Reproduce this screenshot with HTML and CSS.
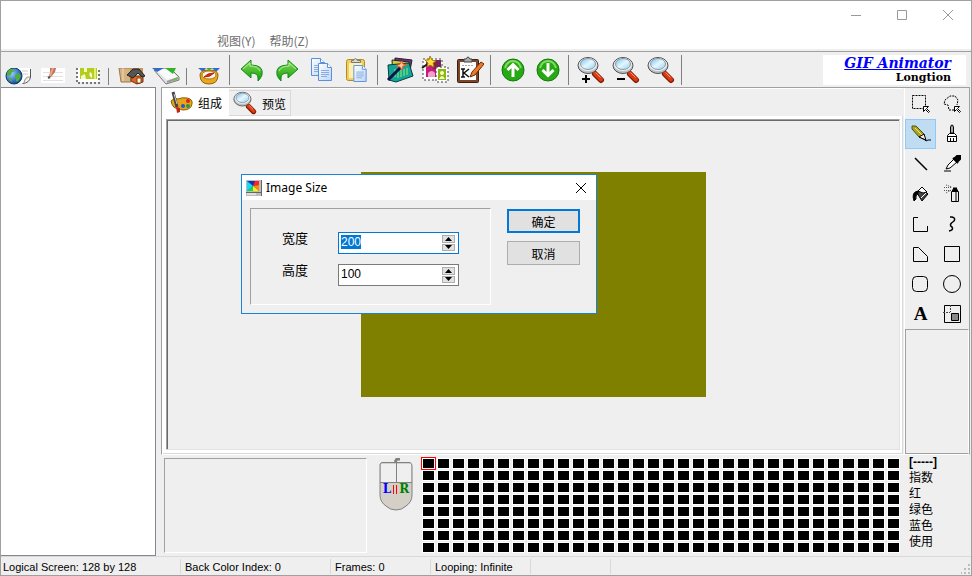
FILE: index.html
```html
<!DOCTYPE html>
<html lang="zh-CN">
<head>
    <meta charset="UTF-8">
    <meta name="viewport" content="width=device-width, initial-scale=1.0">
    <title>GIF Animator</title>
    <link rel="stylesheet" href="styles.css">
</head>
<body>
    <svg class="defs" width="0" height="0" aria-hidden="true">
        <defs>
            <linearGradient id="green" x1="0" y1="0" x2="0" y2="1">
                <stop offset="0" stop-color="#8fe05a"/>
                <stop offset="1" stop-color="#0c9a08"/>
            </linearGradient>
            <linearGradient id="paper" x1="0" y1="0" x2="1" y2="1">
                <stop offset="0" stop-color="#ffffff"/>
                <stop offset="1" stop-color="#b9d5fb"/>
            </linearGradient>
            <radialGradient id="ball" cx="0.35" cy="0.35" r="0.7">
                <stop offset="0" stop-color="#9fd0ff"/>
                <stop offset="1" stop-color="#06409c"/>
            </radialGradient>
            <linearGradient id="glass" x1="0" y1="0" x2="1" y2="1">
                <stop offset="0" stop-color="#6cc0f4"/>
                <stop offset="0.5" stop-color="#e6f7ff"/>
                <stop offset="1" stop-color="#8fd0f6"/>
            </linearGradient>
            <symbol id="magnifier" viewBox="0 0 28 28">
                <path d="M18 18l6 6" stroke="#7a1a05" stroke-width="6" stroke-linecap="round"/>
                <path d="M18 17.500l6 6" stroke="#dd3a12" stroke-width="4" stroke-linecap="round"/>
                <path d="M18.500 16.500l5 5" stroke="#ff9a70" stroke-width="1"/>
                <ellipse cx="11" cy="9.500" rx="10" ry="8" fill="#b9c0c3" stroke="#555" stroke-width="1"/>
                <ellipse cx="11" cy="8.500" rx="9" ry="6.500" fill="#f4f4f4"/>
                <ellipse cx="11" cy="8" rx="7.500" ry="5.500" fill="url(#glass)" stroke="#8b979c" stroke-width="1"/>
            </symbol>
            <symbol id="sheet" viewBox="0 0 14 18">
                <path d="M.5.5h9l4 4v13H.5z" fill="url(#paper)" stroke="#5b8fd6"/>
                <path d="M9.500.5v4h4" fill="#fff" stroke="#5b8fd6"/>
                <path d="M3 7.500h8M3 9.500h8M3 11.500h8M3 13.500h6" stroke="#8badde"/>
            </symbol>
        </defs>
    </svg>

    <div class="window">
        <header class="titlebar">
            <div class="window-buttons">
                <button type="button" aria-label="Minimize"><svg width="12" height="12"><path d="M1 6.500h10" stroke="#999"/></svg></button>
                <button type="button" aria-label="Maximize"><svg width="12" height="12"><path d="M1.500 1.500h9v9h-9z" fill="none" stroke="#999"/></svg></button>
                <button type="button" aria-label="Close"><svg width="12" height="12"><path d="M1 1l10 10M11 1L1 11" stroke="#999"/></svg></button>
            </div>
            <nav class="menu">
                <a href="#">视图(Y)</a>
                <a href="#">帮助(Z)</a>
            </nav>
        </header>

        <div class="toolbar">
            <button class="tool cut" type="button" aria-label="Web page">
                <svg width="26" height="17">
                    <path d="M12 0h13v9q-1 6-7 6h-6z" fill="#fff"/>
                    <path d="M25.500 1v8q-1 6-8 6.500" fill="none" stroke="#555"/>
                    <path d="M25 9q-5-1-6 6" fill="#e4e4e4" stroke="#999"/>
                    <path d="M17 3h6M17 6h6" stroke="#ccc"/>
                    <circle cx="9" cy="8" r="8" fill="url(#ball)" stroke="#123a70"/>
                    <path d="M2 5q2-5 6-4l2 2-3 1-1 3-4 1zM10 7l4-2 2 3q-1 4-4 6-2-1-1-3-2-2-1-4zM4 10l3 1v3l-3-2z" fill="#4fae3d"/>
                </svg>
            </button>
            <button class="tool cut" type="button" aria-label="Script">
                <svg width="26" height="17">
                    <path d="M1 0h24v15H1z" fill="#fff"/>
                    <path d="M3 4.500h20M3 8.500h20M3 12.500h20" stroke="#e0e0e0"/>
                    <path d="M10 0h6l-1 4-4 5-3 1 2-5z" fill="#c0705a"/>
                    <path d="M13 0l-3 8" stroke="#e8a58a" stroke-width="2"/>
                    <path d="M8 10l2-1" stroke="#555" stroke-width="2"/>
                </svg>
            </button>
            <button class="tool cut" type="button" aria-label="Stamp">
                <svg width="26" height="17">
                    <path d="M2 0h22v14H2z" fill="#fff"/>
                    <path d="M2 0v15h22V0" fill="none" stroke="#777" stroke-width="2" stroke-dasharray="2 2"/>
                    <path d="M5 0h17v11H5z" fill="#b4cb20"/>
                    <path d="M9 0v4h3V0zM15 4q3 1 2 6q-4-2-2-6zM6 8l4-2 1 5H6z" fill="#f4fac4"/>
                    <path d="M20 0v11" stroke="#e6f070" stroke-width="2"/>
                </svg>
            </button>
            <span class="sep low"></span>
            <button class="tool cut" type="button" aria-label="Home">
                <svg width="28" height="17">
                    <path d="M2 0h12v14H4z" fill="#d6b283" stroke="#9b784b"/>
                    <path d="M6 0v13" stroke="#f0dab4"/>
                    <path d="M13 0h13v6H13z" fill="#c39660"/>
                    <path d="M14 8h12v6l-6 2-6-3z" fill="#d86820" stroke="#713009"/>
                    <path d="M10 7l6-6h6l6 7-3 1-4-4-5 5z" fill="#555" stroke="#222"/>
                    <path d="M20 10h4v5h-4z" fill="#fff" stroke="#893a0c"/>
                </svg>
            </button>
            <button class="tool cut" type="button" aria-label="Save">
                <svg width="28" height="17">
                    <path d="M2 2l16-2 9 9v3l-13 4z" fill="#e4e4e4" stroke="#777"/>
                    <path d="M4 2l13-2 8 9-10 3z" fill="#fafafa"/>
                    <path d="M15 14l11-4" stroke="#999" stroke-width="2"/>
                    <path d="M0 0h12L5 4z" fill="#2c6dcc"/>
                    <path d="M13 0h11l-3 6z" fill="#2fb42a"/>
                    <path d="M22 12l3-1" stroke="#5acb38" stroke-width="2"/>
                </svg>
            </button>
            <span class="sep low"></span>
            <button class="tool cut" type="button" aria-label="Preview in browser">
                <svg width="26" height="17">
                    <path d="M2 0h8l-3 4zM16 0h8l-4 4z" fill="#286fd0"/>
                    <path d="M10 0h7l-4 2z" fill="#36a936"/>
                    <path d="M4 7q0-5 9-5t9 5q0 9-9 9T4 7z" fill="#e9a81c" stroke="#94620b"/>
                    <ellipse cx="13" cy="7" rx="7" ry="4" fill="#fff8e5" stroke="#a87922"/>
                    <path d="M8 9l4-3 6-1-4 3z" fill="#e02a18" stroke="#b41f10"/>
                </svg>
            </button>
            <span class="sep"></span>
            <button class="tool" type="button" aria-label="Undo">
                <svg width="24" height="24"><path d="M1 11L11 2v5q13 0 11 10-1 3-4 6v-3q0-5-7-5v5z" fill="url(#green)" stroke="#148a17"/><path d="M3 11l7-6v3q8 0 10 5" fill="none" stroke="#b2efa0"/></svg>
            </button>
            <button class="tool" type="button" aria-label="Redo">
                <svg width="24" height="24"><path d="M23 11L13 2v5Q0 7 2 17q1 3 4 6v-3q0-5 7-5v5z" fill="url(#green)" stroke="#148a17"/><path d="M21 11l-7-6v3q-8 0-10 5" fill="none" stroke="#b2efa0"/></svg>
            </button>
            <button class="tool" type="button" aria-label="Copy">
                <svg width="24" height="26"><use href="#sheet" x="1" y="1" width="14" height="18"/><use href="#sheet" x="8" y="6" width="14" height="18"/></svg>
            </button>
            <button class="tool" type="button" aria-label="Paste">
                <svg width="24" height="26">
                    <rect x="1.500" y="2.500" width="18" height="21" rx="2" fill="#f2cf5b" stroke="#b48b21"/>
                    <path d="M4 6h13v15H4z" fill="#fdf0b5"/>
                    <path d="M6.500 5.500v-2h2q2-4 4 0h3v2z" fill="#d8d8d8" stroke="#777"/>
                    <use href="#sheet" x="8" y="8" width="14" height="17"/>
                </svg>
            </button>
            <span class="sep"></span>
            <button class="tool" type="button" aria-label="Effects">
                <svg width="28" height="28">
                    <path d="M9 2l17 2-3 16L8 16z" fill="#7a2b88" stroke="#222"/>
                    <path d="M6 4l17 2 1 14L7 22z" fill="#d8c63c" stroke="#222"/>
                    <path d="M2 9l21-2 4 13-17 6-7-2z" fill="#12a69a" stroke="#093d3c"/>
                    <path d="M9 13v8M12 14v8M15 13v8M18 13v7M21 12v7" stroke="#9dea62"/>
                    <path d="M2 24L15 11" stroke="#0a1446" stroke-width="3"/>
                    <path d="M16 5l1 3 4 1-4 1-1 4-2-3-4-1 4-2z" fill="#ffc09a" stroke="#e75a28"/>
                </svg>
            </button>
            <button class="tool" type="button" aria-label="Stamp wizard">
                <svg width="28" height="28">
                    <path d="M2 3h19v21H2z" fill="#fff" stroke="#444" stroke-dasharray="2 2"/>
                    <path d="M5 6h14v15H5z" fill="#c81a7c"/>
                    <path d="M12 4h8v9h-8z" fill="#7a2454"/>
                    <path d="M7 21v-4q4-4 7 0v4z" fill="#f0a0ca"/>
                    <path d="M15 11h12v15H15z" fill="#fff" stroke="#444" stroke-dasharray="2 2"/>
                    <path d="M17 13h8v11h-8z" fill="#8eb514"/>
                    <circle cx="21" cy="17" r="2" fill="#f4ffc2"/>
                    <path d="M18 23q3-6 6 0z" fill="#f4ffc2"/>
                    <path d="M1 12l7-5" stroke="#1a1a1a" stroke-width="2"/>
                    <path d="M9 0l2 4 4 1-3 2 1 4-4-2-3 2 1-4-3-3h4z" fill="#ffe33a" stroke="#af7a08"/>
                </svg>
            </button>
            <button class="tool" type="button" aria-label="Frame notes">
                <svg width="28" height="28">
                    <rect x="1.500" y="3.500" width="21" height="23" rx="1" fill="#7c4529" stroke="#39200f"/>
                    <path d="M4 6h16v18H4z" fill="#fff"/>
                    <path d="M8 6V3h2q2-4 4 0h2v3z" fill="#aaa" stroke="#444"/>
                    <path d="M6 9.500h11" stroke="#aaa" stroke-dasharray="2 1"/>
                    <path d="M7 13v8M13 13l-5 4 5 4M5 13h4M5 21h4" stroke="#111" stroke-width="1.500" fill="none"/>
                    <path d="M14 21l2-5L25 6l3 2-9 11z" fill="#ee782a" stroke="#6b2a08"/>
                </svg>
            </button>
            <span class="sep"></span>
            <button class="tool" type="button" aria-label="Move up">
                <svg width="24" height="24"><circle cx="12" cy="12" r="11" fill="#27a914" stroke="#0e7b0a"/><path d="M4 10q2-7 8-7t8 7" fill="none" stroke="#81db5d" stroke-width="2"/><path d="M12 19V7M6.500 12L12 6.500l5.500 5.500" fill="none" stroke="#fff" stroke-width="3"/></svg>
            </button>
            <button class="tool" type="button" aria-label="Move down">
                <svg width="24" height="24"><circle cx="12" cy="12" r="11" fill="#27a914" stroke="#0e7b0a"/><path d="M4 10q2-7 8-7t8 7" fill="none" stroke="#81db5d" stroke-width="2"/><path d="M12 5v12M6.500 12l5.500 5.500 5.500-5.500" fill="none" stroke="#fff" stroke-width="3"/></svg>
            </button>
            <span class="sep"></span>
            <button class="tool" type="button" aria-label="Zoom in">
                <svg width="28" height="28"><use href="#magnifier" width="28" height="28"/><path d="M5 23h8M9 19v8" stroke="#000" stroke-width="2"/></svg>
            </button>
            <button class="tool" type="button" aria-label="Zoom out">
                <svg width="28" height="28"><use href="#magnifier" width="28" height="28"/><path d="M5 23h8" stroke="#000" stroke-width="2"/></svg>
            </button>
            <button class="tool" type="button" aria-label="Actual size">
                <svg width="28" height="28"><use href="#magnifier" width="28" height="28"/></svg>
            </button>
            <span class="sep"></span>
            <div class="brand">
                <a href="#">GIF Animator</a>
                <span>Longtion</span>
            </div>
        </div>

        <main class="workspace">
            <aside class="frames"></aside>
            <div class="editor">
                <div class="editor-top">
                    <section class="pages">
                        <div class="tabs">
                            <button class="tab active" type="button">
                                <svg width="24" height="24">
                                    <path d="M2 10q3-4 7-2 5-2 9-1 6 1 5 6-1 6-9 6-3 0-4-2-6 2-8-7z" fill="#e6a51b" stroke="#8d5a06"/>
                                    <circle cx="19" cy="10" r="2" fill="#d92222"/><circle cx="19" cy="15" r="2" fill="#259b34"/><circle cx="14" cy="15" r="2" fill="#2456d5"/>
                                    <path d="M4 1l4 15" stroke="#444" stroke-width="3"/>
                                    <path d="M5 3l3 10" stroke="#ccc"/>
                                    <path d="M7 16l4 1v4l-3 1z" fill="#c52218"/>
                                </svg>
                                组成
                            </button>
                            <button class="tab" type="button">
                                <svg width="24" height="24"><use href="#magnifier" width="24" height="24"/></svg>
                                预览
                            </button>
                        </div>
                        <div class="page">
                            <div class="canvas"><div class="picture"></div></div>
                        </div>
                    </section>

                    <aside class="palette">
                        <div class="draw-tools">
                            <button type="button" aria-label="Select rectangle"><svg width="20" height="20"><path d="M1.500 1.500h13v13h-13z" stroke-dasharray="2 1"/><path d="M12.500 12.500h5l-2 2 3 3-1 1-3-3-2 2z" fill="#fff"/></svg></button>
                            <button type="button" aria-label="Select region"><svg width="20" height="20"><path d="M12 16H7l-1-5-4-1 1-4 5-4h5l3 4-1 5" stroke-dasharray="2 1"/><path d="M12.500 12.500h5l-2 2 3 3-1 1-3-3-2 2z" fill="#fff"/></svg></button>
                            <button class="on" type="button" aria-label="Pencil"><svg width="20" height="20"><path d="M1 2h4l8 8 1 6-6-3-7-8z" fill="#a9a324" stroke="#55520e"/><path d="M4 4l7 7" stroke="#eee67a"/><path d="M8 13l5-3 2 6z" fill="#f6eddc"/><path d="M13 15l2 2 2-1h3"/></svg></button>
                            <button type="button" aria-label="Brush"><svg width="20" height="20"><path d="M8.500 9V3l1-2h1l1 2v6z" fill="#aaa"/><path d="M5.500 17.500v-6l2-2h5l2 2v6zM5 12.500h9M8.500 14v3M11.500 14v3" fill="#fff"/></svg></button>
                            <button type="button" aria-label="Line"><svg width="20" height="20"><path d="M4 4l12 12" stroke-width="1.500"/></svg></button>
                            <button type="button" aria-label="Pick colour"><svg width="20" height="20"><path d="M2 17h7" stroke="#777" stroke-width="2"/><path d="M4 15l2-4 6-6 3 3-7 6z" fill="#fff"/><path d="M11 4l5 5M12 5l3-3h3v3l-3 3" stroke-width="2" fill="#000"/></svg></button>
                            <button type="button" aria-label="Fill"><svg width="20" height="20"><path d="M6 9l5-5 6 6-6 7z" fill="#444"/><path d="M7 7l4-4 5 5-4 1z" fill="#fff"/><path d="M3 17q-3-9 4-10v3q-3 1-2 5z" fill="#000"/><path d="M10 14l5-5" stroke="#fff"/></svg></button>
                            <button type="button" aria-label="Spray"><svg width="20" height="20"><path d="M9.500 7.500h7v10h-7z" fill="#eee"/><path d="M10 6.500h6M11 4.500h3v2" stroke-width="2"/><path d="M14 8v9" stroke="#777" stroke-width="2"/><path d="M2 3.500h8M2 6.500h7M4 1l6 2M4 9l5-3" stroke="#555" stroke-dasharray="1 1"/></svg></button>
                            <button type="button" aria-label="Polyline"><svg width="20" height="20"><path d="M7 3.500H2.500v14h14V12"/></svg></button>
                            <button type="button" aria-label="Curve"><svg width="20" height="20"><path d="M8 3h2q4 1 2 4-6 4-2 6 2 3-3 4" stroke-width="1.500"/></svg></button>
                            <button type="button" aria-label="Polygon"><svg width="20" height="20"><path d="M2.500 3.500h5l9 9v5h-14z"/></svg></button>
                            <button type="button" aria-label="Rectangle"><svg width="20" height="20"><path d="M2.500 2.500h15v15h-15z"/></svg></button>
                            <button type="button" aria-label="Rounded rectangle"><svg width="20" height="20"><rect x="1.500" y="2.500" width="15" height="15" rx="4"/></svg></button>
                            <button type="button" aria-label="Ellipse"><svg width="20" height="20"><circle cx="10" cy="10" r="8.500"/></svg></button>
                            <button class="letter" type="button" aria-label="Text">A</button>
                            <button type="button" aria-label="Hot spot"><svg width="20" height="20"><path d="M2.500 1.500h16v17h-16z"/><path d="M9.500 9.500h7v7h-7z" fill="#888"/><path d="M1 8.500h7M8.500 1v7" stroke-dasharray="2 1" stroke="#444"/></svg></button>
                        </div>
                        <div class="tool-options"></div>
                    </aside>
                </div>

                <div class="editor-bottom">
                    <div class="preview-box"></div>
                    <div class="mouse">
                        <svg width="34" height="54">
                            <path d="M16 4l2-3h3" fill="none" stroke="#808080" stroke-width="3"/>
                            <path d="M3 4.500h28q2 1 2 3V37q0 7-6 11-4 4-10 4T7 48q-6-4-6-11V7q0-2 2-2.500z" fill="#d4d0c8" stroke="#808080"/>
                            <path d="M2 6h30v18H2z" fill="#efefef"/>
                            <path d="M17.500 5v20M1 24.500h32" stroke="#808080"/>
                        </svg>
                        <div class="mouse-letters"><span class="left">L</span><span class="mid"></span><span class="right">R</span></div>
                    </div>
                    <div class="swatches" id="swatches"></div>
                    <div class="color-info">
                        <b>[-----]</b>
                        <span>指数</span>
                        <span>红</span>
                        <span>绿色</span>
                        <span>蓝色</span>
                        <span>使用</span>
                    </div>
                </div>
            </div>
        </main>

        <footer class="statusbar">
            <span class="wide">Logical Screen: 128 by 128</span>
            <span class="medium">Back Color Index: 0</span>
            <span class="narrow">Frames: 0</span>
            <span class="narrow">Looping: Infinite</span>
            <span class="small"></span>
            <svg class="grip" width="10" height="10"><path d="M7 0h2v2H7zM7 4h2v2H7zM7 8h2v2H7zM3 4h2v2H3zM3 8h2v2H3zM0 8h1v2H0z" fill="#bbb"/></svg>
        </footer>

        <form class="dialog" id="sizeForm" role="dialog" aria-labelledby="dialogTitle">
            <div class="dialog-title">
                <svg width="16" height="16">
                    <path d="M0 0h16v16H0z" fill="#bdbdbd"/>
                    <path d="M15.500 0v16M0 12.500h16" stroke="#666"/>
                    <path d="M1 1h12v10H1z" fill="#1c2fd8"/>
                    <path d="M7 6L4 1h4z" fill="#1232a0"/><path d="M7 6l2-5h4v4z" fill="#f22"/><path d="M7 6l6-1v6z" fill="#f80"/>
                    <path d="M7 6l6 5H7z" fill="#fe1"/><path d="M7 6v5H1z" fill="#1d4"/><path d="M7 6l-6 5V1z" fill="#1de"/>
                    <path d="M1 14h9" stroke="#fff"/>
                </svg>
                <span id="dialogTitle">Image Size</span>
                <button type="button" aria-label="Close"><svg width="12" height="12"><path d="M1 1l10 10M11 1L1 11" stroke="#000"/></svg></button>
            </div>
            <div class="dialog-body">
                <div class="fields">
                    <div class="field">
                        <label for="width">宽度</label>
                        <div class="spin focus">
                            <input type="text" id="width" name="width" value="200">
                            <div class="arrows">
                                <button type="button" aria-label="Increase width"><svg width="7" height="4"><path d="M0 4l3.500-4L7 4z"/></svg></button>
                                <button type="button" aria-label="Decrease width"><svg width="7" height="4"><path d="M0 0l3.500 4L7 0z"/></svg></button>
                            </div>
                        </div>
                    </div>
                    <div class="field">
                        <label for="height">高度</label>
                        <div class="spin">
                            <input type="text" id="height" name="height" value="100">
                            <div class="arrows">
                                <button type="button" aria-label="Increase height"><svg width="7" height="4"><path d="M0 4l3.500-4L7 4z"/></svg></button>
                                <button type="button" aria-label="Decrease height"><svg width="7" height="4"><path d="M0 0l3.500 4L7 0z"/></svg></button>
                            </div>
                        </div>
                    </div>
                </div>
                <div class="actions">
                    <button class="default" type="submit">确定</button>
                    <button type="button">取消</button>
                </div>
            </div>
        </form>
    </div>

    <script>
        const swatches = document.getElementById('swatches');
        for (let i = 0; i < 256; i++) {
            const swatch = document.createElement('span');
            swatch.className = i === 0 ? 'swatch current' : 'swatch';
            swatches.appendChild(swatch);
        }

        document.getElementById('sizeForm').addEventListener('submit', event => event.preventDefault());

        const widthInput = document.getElementById('width');
        widthInput.focus();
        widthInput.select();
    </script>
</body>
</html>
```
FILE: styles.css
```css
* {
    box-sizing: border-box;
}
body {
    margin: 0;
    background-color: #efefef;
    color: #000;
    font-family: "Liberation Sans", "Noto Sans CJK SC", sans-serif;
    font-size: 12px;
}
button, input {
    font: inherit;
    color: inherit;
    padding: 0;
    border: none;
    background: none;
}
svg {
    display: block;
    flex: none;
}
.defs {
    position: absolute;
}
.window {
    position: relative;
    display: flex;
    flex-direction: column;
    min-height: 100vh;
}
.window::after {
    content: "";
    position: absolute;
    inset: 0;
    border: 1px solid #a0a0a0;
    pointer-events: none;
}

/* title and menu */
.titlebar {
    background-color: #fff;
    border-bottom: 1px solid #a0a0a0;
    box-shadow: inset 0 -2px #efefef;
}
.window-buttons {
    display: flex;
    justify-content: flex-end;
    height: 30px;
    padding-right: 1px;
}
.window-buttons button {
    display: flex;
    align-items: center;
    justify-content: center;
    width: 46px;
}
.menu {
    display: flex;
    gap: 14px;
    height: 21px;
    padding-left: 217px;
    line-height: 21px;
}
.menu a {
    color: #6d6d6d;
    font-family: "Noto Sans CJK SC", sans-serif;
    text-decoration: none;
}

/* toolbar */
.toolbar {
    display: flex;
    align-items: center;
    height: 35px;
}
.tool {
    display: flex;
    align-items: center;
    justify-content: center;
    flex: none;
    width: 35px;
    height: 35px;
}
.tool.cut {
    align-items: flex-end;
    padding-bottom: 2px;
}
.sep {
    flex: none;
    width: 8px;
    height: 30px;
    background: linear-gradient(#808080, #808080) 3px 0 / 1px 100% no-repeat;
}
.sep.low {
    align-self: flex-end;
    height: 17px;
    margin-bottom: 2px;
}
.brand {
    display: flex;
    flex-direction: column;
    align-items: flex-end;
    width: 143px;
    height: 30px;
    margin-left: auto;
    margin-right: 6px;
    padding-right: 15px;
    background-color: #fff;
    font-family: "DejaVu Serif", serif;
    font-weight: bold;
}
.brand a {
    color: #00f;
    font-size: 14px;
    font-style: italic;
    line-height: 16px;
}
.brand span {
    font-size: 11px;
    line-height: 13px;
}

/* workspace */
.workspace {
    display: flex;
    flex: 1;
    gap: 5px;
}
.frames {
    flex: none;
    width: 156px;
    background-color: #fff;
    border: 1px solid #828790;
}
.editor {
    display: flex;
    flex: 1;
    flex-direction: column;
}
.editor-top {
    display: flex;
    flex: 1;
    margin-right: 2px;
    border: 1px solid #a0a0a0;
    border-bottom-color: #fff;
}
.pages {
    display: flex;
    flex: 1;
    flex-direction: column;
    border-left: 1px solid #fff;
    border-top: 1px solid #fff;
}
.tabs {
    display: flex;
    height: 27px;
}
.tab {
    display: flex;
    align-items: center;
    gap: 5px;
    padding: 0 4px;
    margin-top: 1px;
    border: 1px solid #d9d9d9;
    border-left: none;
}
.tab.active {
    margin-top: 0;
    padding-right: 7px;
    background-color: #fff;
    border: none;
}
.tab.active svg {
    margin-left: 2px;
}
.page {
    display: flex;
    flex: 1;
    padding: 3px 2px 3px 3px;
    background-color: #fff;
    border-right: 1px solid #d9d9d9;
    border-bottom: 1px solid #d9d9d9;
}
.canvas {
    display: flex;
    flex: 1;
    align-items: center;
    justify-content: center;
    background-color: #efefef;
    border: 1px solid #a0a0a0;
    border-right-color: #e3e3e3;
    border-bottom-color: #e3e3e3;
    box-shadow: inset 1px 1px #696969;
}
.picture {
    width: 345px;
    height: 225px;
    background-color: #808000;
}

/* drawing tools */
.palette {
    display: flex;
    flex: none;
    flex-direction: column;
    width: 65px;
    margin-left: 1px;
    border-left: 1px solid #fff;
}
.draw-tools {
    display: grid;
    grid-template-columns: 31px 31px;
    grid-auto-rows: 30px;
    padding-top: 1px;
}
.draw-tools button {
    display: flex;
    align-items: center;
    justify-content: center;
    border: 1px solid transparent;
}
.draw-tools .on {
    background-color: #c0dcf3;
    border-color: #90c8f6;
}
.draw-tools svg {
    fill: none;
    stroke: #000;
}
.draw-tools .letter {
    font: bold 19px "Liberation Serif", serif;
}
.tool-options {
    flex: 1;
    border: 1px solid #a0a0a0;
    border-right-color: #fff;
}

/* bottom panel */
.editor-bottom {
    display: flex;
    align-items: flex-start;
    height: 101px;
    padding: 3px 0 3px 3px;
}
.preview-box {
    align-self: stretch;
    width: 203px;
    border: 1px solid #a0a0a0;
    border-right-color: #fff;
    border-bottom-color: #fff;
}
.mouse {
    position: relative;
    margin-left: 12px;
}
.mouse-letters {
    position: absolute;
    top: 24px;
    left: 0;
    right: 0;
    display: flex;
    align-items: center;
    justify-content: center;
    gap: 2px;
    font: bold 12px/15px "DejaVu Serif", serif;
}
.left {
    color: #00f;
}
.mid {
    width: 4px;
    height: 9px;
    border: solid #f00;
    border-width: 0 1px;
}
.right {
    color: #008000;
}
.swatches {
    display: grid;
    grid-template-columns: repeat(32, 13px);
    grid-auto-rows: 11px;
    gap: 1px 2px;
    margin-left: 9px;
}
.swatch {
    background-color: #000;
    border: 1px solid #fff;
}
.swatch.current {
    outline: 1px solid #f00;
}
.color-info {
    display: flex;
    flex-direction: column;
    width: 30px;
    margin-left: 9px;
    margin-top: -4px;
    font-size: 12px;
    line-height: 16px;
}
.color-info span {
    width: 24px;
    overflow: hidden;
}

/* status bar */
.statusbar {
    display: flex;
    height: 20px;
    padding: 2px 1px 2px 1px;
    border-top: 1px solid #d9d9d9;
    font-size: 11px;
    line-height: 17px;
}
.statusbar span {
    padding-left: 2px;
    border-right: 1px solid #d9d9d9;
    white-space: nowrap;
}
.statusbar span + span {
    padding-left: 4px;
}
.wide {
    width: 180px;
}
.medium {
    width: 150px;
}
.narrow {
    width: 100px;
}
.small {
    width: 80px;
}
.grip {
    align-self: flex-end;
    margin-left: auto;
}

/* image size dialog */
.dialog {
    position: absolute;
    top: 174px;
    left: 241px;
    width: 356px;
    background-color: #efefef;
    border: 1px solid #1883d7;
}
.dialog-title {
    display: flex;
    align-items: center;
    gap: 4px;
    height: 25px;
    padding: 0 9px 0 4px;
    background-color: #fff;
    font-family: "Noto Sans", sans-serif;
}
.dialog-title button {
    margin-left: auto;
}
.dialog-body {
    display: flex;
    align-items: flex-start;
    gap: 16px;
    padding: 8px;
}
.fields {
    display: flex;
    flex-direction: column;
    gap: 10px;
    width: 241px;
    height: 97px;
    padding: 23px 31px 0;
    border: 1px solid #a0a0a0;
    border-right-color: #fff;
    border-bottom-color: #fff;
}
.field {
    display: flex;
    justify-content: space-between;
    height: 22px;
}
.field label {
    font-size: 13px;
    line-height: 14px;
}
.spin {
    display: flex;
    justify-content: space-between;
    width: 121px;
    padding: 2px 3px 2px 2px;
    background-color: #fff;
    border: 1px solid #7a7a7a;
}
.spin.focus {
    border-color: #0078d7;
}
.spin input {
    width: 80px;
    height: 14px;
    outline: none;
}
.spin input::selection {
    background-color: #0078d7;
    color: #fff;
}
.arrows {
    display: flex;
    flex-direction: column;
    gap: 1px;
}
.arrows button {
    display: flex;
    align-items: center;
    justify-content: center;
    width: 13px;
    height: 8px;
    background-color: #e1e1e1;
    border: 1px solid #adadad;
}
.actions {
    display: flex;
    flex-direction: column;
    gap: 8px;
    padding-top: 1px;
}
.actions button {
    width: 73px;
    height: 24px;
    background-color: #e1e1e1;
    border: 1px solid #adadad;
}
.actions .default {
    border: 2px solid #0078d7;
}
```
